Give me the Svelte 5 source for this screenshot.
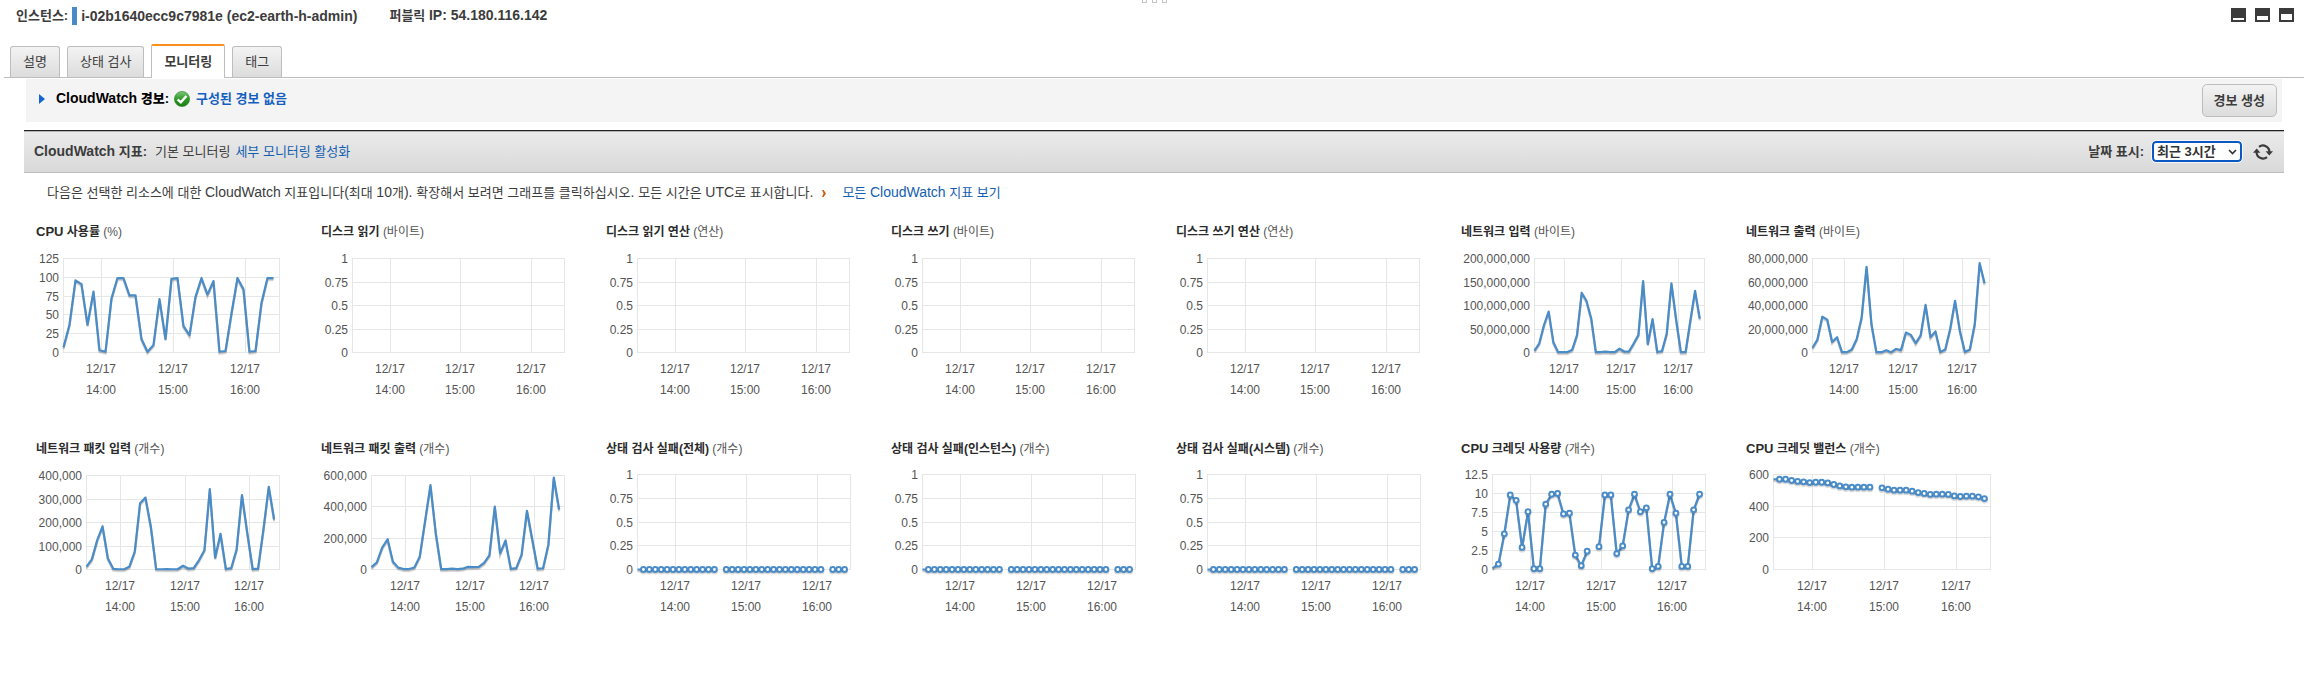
<script>
  const idle = ['1', '0.75', '0.5', '0.25', '0'];
  const zeros = Array.from({ length: 36 }, (_, i) => (i === 14 || i === 32 ? null : 0));

  const charts = [
    {
      prefix: 'CPU', name: '사용률', unit: '(%)', left: 27, max: 125,
      ticks: ['125', '100', '75', '50', '25', '0'],
      data: [7, 37, 96, 91, 37, 81, 3, 1, 72, 99, 99, 76, 76, 18, 1, 10, 71, 18, 98, 99, 35, 23, 74, 99, 77, 95, 1, 2, 52, 99, 84, 1, 2, 66, 99, 99]
    },
    { name: '디스크 읽기', unit: '(바이트)', left: 31, max: 1, ticks: idle, data: [] },
    { name: '디스크 읽기 연산', unit: '(연산)', left: 31, max: 1, ticks: idle, data: [] },
    { name: '디스크 쓰기', unit: '(바이트)', left: 31, max: 1, ticks: idle, data: [] },
    { name: '디스크 쓰기 연산', unit: '(연산)', left: 31, max: 1, ticks: idle, data: [] },
    {
      name: '네트워크 입력', unit: '(바이트)', left: 73, max: 200,
      ticks: ['200,000,000', '150,000,000', '100,000,000', '50,000,000', '0'],
      data: [4, 19, 58, 87, 22, 1, 1, 1, 6, 37, 127, 110, 73, 1, 1, 2, 1, 1, 8, 2, 2, 19, 37, 152, 18, 71, 1, 3, 40, 147, 70, 1, 1, 67, 131, 72]
    },
    {
      name: '네트워크 출력', unit: '(바이트)', left: 66, max: 80,
      ticks: ['80,000,000', '60,000,000', '40,000,000', '20,000,000', '0'],
      data: [4, 11, 30.5, 28, 9, 13, 0.3, 0.3, 2.5, 11.5, 30, 73, 24, 0.3, 0.3, 2, 0.3, 3, 2, 17, 15, 8, 14.5, 40.5, 13, 18, 0.5, 2.5, 20, 44, 18, 0.5, 2.5, 24, 76, 59]
    },
    {
      name: '네트워크 패킷 입력', unit: '(개수)', left: 50, max: 400,
      ticks: ['400,000', '300,000', '200,000', '100,000', '0'],
      data: [12, 43, 125, 183, 47, 3, 1, 1, 12, 76, 282, 306, 183, 2, 1, 2, 1, 1, 16, 4, 6, 40, 82, 342, 50, 152, 2, 6, 85, 317, 155, 2, 3, 170, 352, 213]
    },
    {
      name: '네트워크 패킷 출력', unit: '(개수)', left: 50, max: 600,
      ticks: ['600,000', '400,000', '200,000', '0'],
      data: [15, 45, 140, 193, 50, 12, 3, 3, 13, 82, 310, 538, 230, 3, 3, 6, 3, 5, 17, 15, 16, 42, 90, 402, 103, 185, 4, 9, 95, 375, 190, 5, 8, 160, 587, 383]
    },
    { name: '상태 검사 실패(전체)', unit: '(개수)', left: 31, max: 1, ticks: idle, data: zeros, dots: true },
    { name: '상태 검사 실패(인스턴스)', unit: '(개수)', left: 31, max: 1, ticks: idle, data: zeros, dots: true },
    { name: '상태 검사 실패(시스템)', unit: '(개수)', left: 31, max: 1, ticks: idle, data: zeros, dots: true },
    {
      prefix: 'CPU', name: '크레딧 사용량', unit: '(개수)', left: 31, max: 12.5, dots: true,
      ticks: ['12.5', '10', '7.5', '5', '2.5', '0'],
      data: [0.15, 0.7, 4.7, 9.8, 9.1, 2.9, 7.6, 0.1, 0.1, 8.6, 9.9, 10, 7.3, 7.4, 1.9, 0.5, 2.4, null, 3, 9.8, 9.8, 2.1, 3.1, 7.85, 9.9, 7.6, 8.1, 0.1, 0.4, 6.2, 9.9, 7.4, 0.4, 0.4, 7.85, 9.9]
    },
    {
      prefix: 'CPU', name: '크레딧 밸런스', unit: '(개수)', left: 27, max: 600, dots: true,
      ticks: ['600', '400', '200', '0'],
      data: [570, 570, 570, 562, 556, 554, 549, 551, 551, 547, 537, 528, 522, 520, 520, 520, 520, null, 516, 507, 501, 501, 501, 495, 486, 480, 474, 476, 476, 474, 465, 461, 463, 463, 459, 448]
    }
  ];

  const hours = ['14:00', '15:00', '16:00'];
  const BOTTOM = 104;

  function layout(c) {
    const top = c.dots ? 9 : 10;
    const right = c.dots ? 244 : 243;
    const w = right - c.left;
    const h = BOTTOM - top;
    const px = (i) => c.left + 0.5 + (i / 36) * w;
    const py = (v) => BOTTOM + 0.5 - (v / c.max) * h;
    let path = '';
    let pen = false;
    const points = [];
    c.data.forEach((v, i) => {
      if (v === null) {
        pen = false;
        return;
      }
      path += `${pen ? 'L' : 'M'}${px(i).toFixed(2)} ${py(v).toFixed(2)}`;
      pen = true;
      if (i > 0) points.push({ x: px(i), y: py(v) });
    });
    return {
      ...c, top, right, w, h, path, points,
      rows: c.ticks.map((label, k) => ({ label, y: Math.round(top + (k * h) / (c.ticks.length - 1)) })),
      cols: hours.map((label, k) => ({ label, x: Math.round(c.left + (0.178 + k / 3) * w) }))
    };
  }

  const panels = charts.map(layout);
  const tabs = ['설명', '상태 검사', '모니터링', '태그'];
  let active = $state('모니터링');
  let range = $state('3h');
</script>

<div class="grip" aria-hidden="true"><i></i><i></i><i></i></div>

<header>
  <strong class="instance">인스턴스:<span class="mark"></span><span class="latin">i-02b1640ecc9c7981e (ec2-earth-h-admin)</span></strong>
  <strong>퍼블릭 <span class="latin">IP: 54.180.116.142</span></strong>
  <div class="window-buttons">
    <button aria-label="최소화"><svg width="15" height="14"><path fill="#3b3b3b" fill-rule="evenodd" d="M0 0H15V14H0ZM2 10V12H13V10Z" /></svg></button>
    <button aria-label="절반"><svg width="15" height="14"><path fill="#3b3b3b" fill-rule="evenodd" d="M0 0H15V14H0ZM2 8V12H13V8Z" /></svg></button>
    <button aria-label="최대화"><svg width="15" height="14"><path fill="#3b3b3b" fill-rule="evenodd" d="M0 0H15V14H0ZM2 6V12H13V6Z" /></svg></button>
  </div>
</header>

<div class="tabs" role="tablist">
  {#each tabs as tab}
    <button role="tab" aria-selected={active === tab} class:active={active === tab} onclick={() => (active = tab)}>{tab}</button>
  {/each}
</div>

<section class="alarms">
  <svg class="caret" width="6" height="10"><path d="M0 0L6 5L0 10Z" fill="#1566cc" /></svg>
  <strong><span class="latin">CloudWatch</span> 경보:</strong>
  <svg class="ok" width="16" height="16" viewBox="0 0 16 16">
    <defs>
      <linearGradient id="ok-fill" x1="0" y1="0" x2="0" y2="1">
        <stop offset="0" stop-color="#7fc77b" />
        <stop offset="0.5" stop-color="#2f9a2a" />
        <stop offset="1" stop-color="#1c7d17" />
      </linearGradient>
    </defs>
    <circle cx="8" cy="8" r="7.6" fill="url(#ok-fill)" stroke="#1f7f1c" stroke-width="0.6" />
    <path d="M3.6 8.4L6.8 11.4L12.4 5" fill="none" stroke="#fff" stroke-width="2.4" />
  </svg>
  <a href="#alarms">구성된 경보 없음</a>
  <button class="create">경보 생성</button>
</section>

<section class="toolbar">
  <strong><span class="latin">CloudWatch</span> 지표:</strong>
  <span class="mode">기본 모니터링</span>
  <a href="#detailed">세부 모니터링 활성화</a>
  <label for="range">날짜 표시:</label>
  <div class="select">
    <select id="range" bind:value={range}>
      <option value="1h">최근 1시간</option>
      <option value="3h">최근 3시간</option>
      <option value="6h">최근 6시간</option>
    </select>
    <svg width="9" height="6" viewBox="0 0 9 6"><path d="M1 1L4.5 4.6L8 1" fill="none" stroke="#333" stroke-width="1.6" /></svg>
  </div>
  <button class="refresh" aria-label="새로 고침">
    <svg width="20" height="16" viewBox="0 0 20 16">
      <g fill="none" stroke="#3b3b3b" stroke-width="2.2">
        <path d="M6 2.9A6.4 6.4 0 0 1 16.4 8" />
        <path d="M14 13.1A6.4 6.4 0 0 1 3.6 8" />
      </g>
      <path d="M12.6 7.2H20L16.3 11.6ZM0 8.8H7.4L3.7 4.4Z" fill="#3b3b3b" />
    </svg>
  </button>
</section>

<p class="intro">
  <span>다음은 선택한 리소스에 대한 <span class="latin">CloudWatch</span> 지표입니다<span class="latin">(</span>최대 <span class="latin">10</span>개<span class="latin">{'). '}</span>확장해서 보려면 그래프를 클릭하십시오<span class="latin">{'. '}</span>모든 시간은 <span class="latin">UTC</span>로 표시합니다<span class="latin">.</span></span>
  <svg width="4" height="7" viewBox="0 0 4 7"><path d="M0 0H1.6L4 3.5L1.6 7H0L1.6 3.5Z" fill="#cc5c0a" /></svg>
  <a href="#metrics">모든 <span class="latin">CloudWatch</span> 지표 보기</a>
</p>

<main>
  {#each panels as c}
    <article>
      <h2>{#if c.prefix}<span class="prefix">{c.prefix}</span>{' '}{/if}{c.name} <span class="unit">{c.unit}</span></h2>
      <svg class="chart" width="260" height="150" role="img" aria-label={c.name}>
        <g class="grid">
          {#each c.rows as r}
            <rect x={c.left} y={r.y} width={c.w + 1} height="1" />
          {/each}
          {#each c.cols as t}
            <rect x={t.x} y={c.top} width="1" height={c.h} />
          {/each}
          <rect x={c.left} y={c.top} width="1" height={c.h} />
          <rect x={c.right} y={c.top} width="1" height={c.h} />
        </g>
        {#each c.rows as r}
          <text class="ytick" x={c.left - 4} y={r.y + 5}>{r.label}</text>
        {/each}
        {#each c.cols as t}
          <text class="xtick" x={t.x} y="125">12/17</text>
          <text class="xtick" x={t.x} y="146">{t.label}</text>
        {/each}
        <path class="shadow" d={c.path} transform="translate(0 2)" />
        <path class="shadow" d={c.path} transform="translate(0 1)" />
        <path class="line" d={c.path} />
        {#if c.dots}
          {#each c.points as p}
            <circle class="dot-shadow" cx={p.x} cy={p.y + 1.5} r="2.6" />
            <circle class="dot" cx={p.x} cy={p.y} r="2.4" />
          {/each}
        {/if}
      </svg>
    </article>
  {/each}
</main>

<style>
  :global(body) {
    background: #fff;
    color: #3c3c3c;
    font: 13px/18px 'Liberation Sans', 'Noto Sans CJK KR', sans-serif;
  }

  button {
    border: 0;
    padding: 0;
    background: none;
    color: inherit;
    font: inherit;
    white-space: nowrap;
    cursor: pointer;
  }

  svg {
    display: block;
    flex: none;
  }

  a {
    color: #1460b0;
    text-decoration: none;
  }

  .latin {
    font-size: 14px;
    line-height: 1;
  }

  .grip {
    position: absolute;
    top: 0;
    left: 50%;
    display: flex;
    gap: 5px;
    margin-left: -12px;
  }

  .grip i {
    width: 3px;
    height: 2px;
    border: 1px solid #c4c4c4;
    border-top: 0;
  }

  header {
    display: flex;
    align-items: flex-start;
    gap: 32px;
    height: 18px;
    padding: 7px 13px 19px 16px;
  }

  .instance {
    display: flex;
    align-items: center;
  }

  .mark {
    width: 5px;
    height: 18px;
    margin: 0 4px;
    background: #4a8ac9;
  }

  .window-buttons {
    display: flex;
    gap: 9px;
    margin-left: auto;
    padding-top: 1px;
  }

  .tabs {
    display: flex;
    align-items: flex-end;
    gap: 7px;
    height: 33px;
    margin: 0 3px 0 4px;
    padding-left: 6px;
    border-bottom: 1px solid #bdbdbd;
  }

  .tabs button {
    box-sizing: border-box;
    height: 31px;
    padding: 0 12px;
    border: 1px solid #bdbdbd;
    border-bottom: 0;
    border-radius: 3px 3px 0 0;
    background: linear-gradient(#f3f3f3, #dcdcdc);
  }

  .tabs .active {
    height: 34px;
    margin-bottom: -1px;
    border-top: 2px solid #ff8f1c;
    border-radius: 2px 2px 0 0;
    background: #fff;
    font-weight: 700;
  }

  .alarms {
    display: flex;
    align-items: center;
    height: 43px;
    margin: 1px 25px 8px 26px;
    padding: 0 5px 0 13px;
    box-sizing: border-box;
    background: #f4f4f4;
    color: #000;
    font-weight: 700;
  }

  .alarms strong {
    margin: 0 5px 3px 11px;
  }

  .alarms a {
    margin: 0 0 3px 6px;
    color: #1460c0;
  }

  .caret,
  .ok {
    margin-bottom: 3px;
  }

  .create {
    box-sizing: border-box;
    height: 33px;
    margin-left: auto;
    padding: 0 11px;
    border: 1px solid #bdbdbd;
    border-radius: 5px;
    background: linear-gradient(#f3f3f3, #dcdcdc);
    color: #3c3c3c;
  }

  .toolbar {
    display: flex;
    align-items: center;
    height: 43px;
    box-sizing: border-box;
    margin: 0 23px 0 24px;
    padding: 0 11px 0 10px;
    border-top: 1px solid #222;
    border-bottom: 1px solid #bcbcbc;
    background: linear-gradient(#ebebeb, #d9d9d9);
    box-shadow: inset 0 1px #b4b4b4;
  }

  .mode {
    margin: 0 5px 0 8px;
  }

  .toolbar label {
    margin: 0 8px 0 auto;
    font-weight: 700;
  }

  .select {
    position: relative;
  }

  .select select {
    display: block;
    box-sizing: border-box;
    width: 90px;
    height: 21px;
    padding: 0 18px 0 3px;
    border: 2px solid #0b57c4;
    border-radius: 4px;
    outline: 1px solid #f6f6f6;
    appearance: none;
    background: #fff;
    color: #333;
    font: 700 13px/17px 'Liberation Sans', 'Noto Sans CJK KR', sans-serif;
  }

  .select svg {
    position: absolute;
    top: 8px;
    right: 5px;
    pointer-events: none;
  }

  .refresh {
    margin-left: 11px;
  }

  .intro {
    display: flex;
    align-items: center;
    margin: 11px 0 22px 47px;
  }

  .intro svg {
    margin: 0 16px 0 9px;
  }

  main {
    display: grid;
    grid-template-columns: repeat(auto-fill, 285px);
    row-gap: 43px;
    padding-left: 36px;
  }

  h2 {
    height: 16px;
    margin: 0 0 8px;
    color: #2b2b2b;
    font-size: 12px;
    line-height: 16px;
    white-space: nowrap;
  }

  .prefix {
    font-size: 13px;
  }

  .unit {
    color: #545454;
    font-weight: 400;
  }

  .chart {
    overflow: visible;
    font-size: 12px;
  }

  .chart text {
    fill: #545454;
  }

  .grid {
    fill: #e6e6e6;
  }

  .ytick {
    text-anchor: end;
  }

  .xtick {
    text-anchor: middle;
  }

  .line {
    fill: none;
    stroke: #4a8cc8;
    stroke-width: 2.2;
    stroke-linejoin: round;
  }

  .shadow {
    fill: none;
    stroke: rgba(0, 0, 0, 0.14);
    stroke-width: 2.2;
  }

  .dot {
    fill: #fff;
    stroke: #4a8cc8;
    stroke-width: 2;
  }

  .dot-shadow {
    fill: none;
    stroke: rgba(0, 0, 0, 0.14);
    stroke-width: 2;
  }
</style>
